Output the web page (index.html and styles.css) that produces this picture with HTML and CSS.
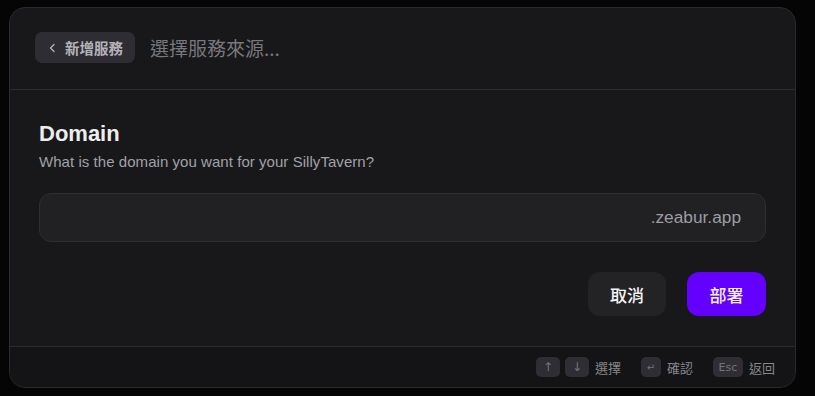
FILE: index.html
```html
<!DOCTYPE html>
<html lang="zh-TW">

<head>
    <meta charset="UTF-8">
    <meta name="viewport" content="width=device-width, initial-scale=1.0">
    <title>選擇服務來源</title>
    <link rel="stylesheet" href="styles.css">
</head>

<body>
    <div class="dialog">
        <div class="dialog-header">
            <button class="back-btn">
                <svg width="8" height="12" viewBox="0 0 8 12" fill="none">
                    <path d="M6 2.5 2.5 6 6 9.5" stroke="currentColor" stroke-width="1.3" stroke-linecap="round" stroke-linejoin="round" />
                </svg>
                新增服務
            </button>
            <span class="search-placeholder">選擇服務來源...</span>
        </div>

        <div class="dialog-body">
            <h2 class="field-title">Domain</h2>
            <p class="field-desc">What is the domain you want for your SillyTavern?</p>
            <div class="domain-input">
                <input type="text">
                <span class="suffix">.zeabur.app</span>
            </div>
            <div class="actions">
                <button class="btn btn-cancel">取消</button>
                <button class="btn btn-deploy">部署</button>
            </div>
        </div>

        <div class="dialog-footer">
            <div class="hint">
                <span class="key">↑</span>
                <span class="key">↓</span>
                <span class="hint-label">選擇</span>
            </div>
            <div class="hint">
                <span class="key key-small">↵</span>
                <span class="hint-label">確認</span>
            </div>
            <div class="hint">
                <span class="key key-wide">Esc</span>
                <span class="hint-label">返回</span>
            </div>
        </div>
    </div>
</body>

</html>
```

FILE: styles.css
```css
* {
    box-sizing: border-box;
}

body {
    margin: 0;
    padding: 7px 19px 0 9px;
    background-color: #050505;
    font-family: "Liberation Sans", "Noto Sans CJK TC", sans-serif;
    color: #e4e4e7;
}

.dialog {
    width: 787px;
    height: 381px;
    background-color: #18181b;
    border: 1px solid #2a2a2e;
    border-radius: 16px;
    overflow: hidden;
    display: flex;
    flex-direction: column;
}

.dialog-header {
    height: 82px;
    padding: 0 25px;
    display: flex;
    align-items: center;
    gap: 15px;
    border-bottom: 1px solid #2c2c30;
}

.back-btn {
    height: 31px;
    padding: 0 12px 0 13px;
    display: flex;
    align-items: center;
    gap: 9px;
    background-color: #2e2d33;
    border: none;
    border-radius: 7px;
    color: #b4b4b8;
    font-family: "Noto Sans CJK TC", sans-serif;
    font-size: 14.5px;
    font-weight: 700;
    margin-top: -2px;
}

.search-placeholder {
    font-family: "Noto Sans CJK TC", sans-serif;
    font-size: 19px;
    color: #77777d;
    margin-top: -3px;
}

.dialog-body {
    flex: 1;
    padding: 30px 29px 0 29px;
}

.field-title {
    margin: 0;
    font-size: 22px;
    font-weight: 700;
    color: #ededed;
    line-height: 28px;
}

.field-desc {
    margin: 4px 0 0 0;
    font-size: 15px;
    letter-spacing: 0.05px;
    color: #a1a1a6;
    line-height: 20px;
}

.domain-input {
    margin-top: 21px;
    height: 49px;
    display: flex;
    align-items: center;
    background-color: #212124;
    border: 1px solid #2e2e33;
    border-radius: 12px;
    padding: 0 24px 0 16px;
}

.domain-input input {
    flex: 1;
    min-width: 0;
    background: transparent;
    border: none;
    outline: none;
    color: #e4e4e7;
    font-size: 16px;
}

.suffix {
    font-size: 17.3px;
    color: #9c9ca1;
}

.actions {
    margin-top: 30px;
    display: flex;
    justify-content: flex-end;
    gap: 21px;
}

.btn {
    height: 44px;
    width: 78px;
    border: none;
    border-radius: 12px;
    font-family: "Noto Sans CJK TC", sans-serif;
    font-size: 17px;
    font-weight: 500;
    color: #f4f4f5;
}

.btn-cancel {
    background-color: #232326;
}

.btn-deploy {
    width: 79px;
    background-color: #6300ff;
}

.dialog-footer {
    height: 41px;
    background-color: #141416;
    border-top: 1px solid #2c2c30;
    display: flex;
    justify-content: flex-end;
    align-items: center;
    gap: 20px;
    padding: 0 20px 0 0;
}

.hint {
    display: flex;
    align-items: center;
    gap: 5px;
}

.key {
    width: 24px;
    height: 20px;
    border-radius: 5px;
    background-color: #2e2e34;
    color: #74747b;
    font-family: "DejaVu Sans", sans-serif;
    font-size: 12px;
    display: flex;
    align-items: center;
    justify-content: center;
}

.key-small {
    width: 20px;
    font-size: 10px;
}

.key-wide {
    width: 30px;
    font-size: 11px;
}

.hint-label {
    font-family: "Noto Sans CJK TC", sans-serif;
    font-size: 13px;
    color: #86868c;
    margin-left: 1px;
}
```
